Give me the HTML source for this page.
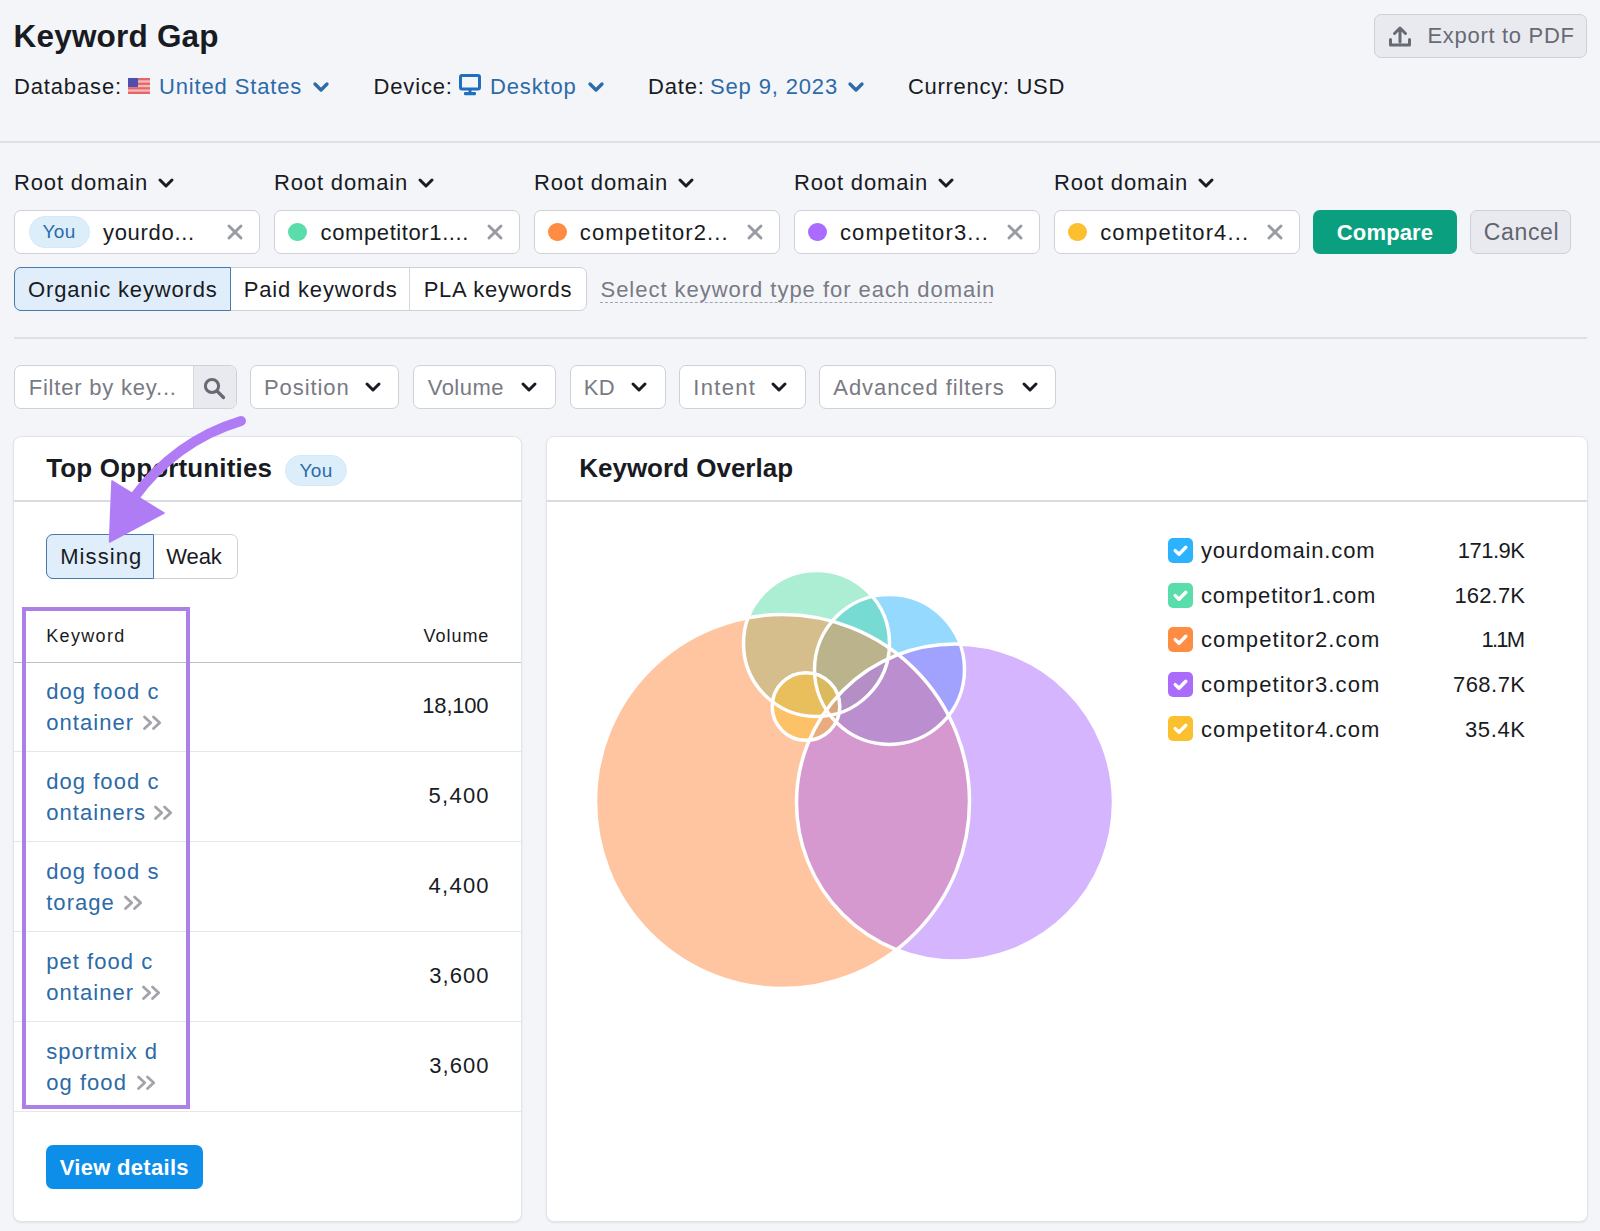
<!DOCTYPE html>
<html><head><meta charset="utf-8">
<style>
*{margin:0;padding:0;box-sizing:border-box}
html,body{width:1600px;height:1231px;overflow:hidden;background:#f4f5f9;font-family:"Liberation Sans",sans-serif;color:#191b23;position:relative}
.t{position:absolute;white-space:nowrap;line-height:1;font-size:22px;letter-spacing:0.85px}
.b{position:absolute;box-sizing:border-box}
.blue{color:#2c6aa8}
.gray{color:#787a84}
.bold{font-weight:bold}
svg{position:absolute;overflow:visible}
</style></head><body>
<div class="t bold" style="left:13.5px;top:20.84px;font-size:31.5px;letter-spacing:0.2px;">Keyword Gap</div>
<div class="t " style="left:14px;top:75.88px;font-size:22px;letter-spacing:0.85px;">Database:</div>
<svg style="left:128px;top:78px" width="22" height="16" viewBox="0 0 22 16">
<rect width="22" height="16" fill="#e2676a"/>
<rect y="2.3" width="22" height="2.3" fill="#f6b9b5"/><rect y="6.9" width="22" height="2.3" fill="#f6b9b5"/><rect y="11.4" width="22" height="2.3" fill="#f6b9b5"/>
<rect width="10" height="9" fill="#4f4fb0"/></svg>
<div class="t blue" style="left:159px;top:75.88px;font-size:22px;letter-spacing:0.85px;">United States</div>
<svg style="left:313px;top:82px" width="16" height="10" viewBox="0 0 16 10"><path d="M2 2 L8 8 L14 2" fill="none" stroke="#2c6aa8" stroke-width="3.3" stroke-linecap="round" stroke-linejoin="round"/></svg>
<div class="t " style="left:373.5px;top:75.88px;font-size:22px;letter-spacing:0.85px;">Device:</div>
<svg style="left:459px;top:74px" width="22" height="22" viewBox="0 0 22 22">
<rect x="1.5" y="1.5" width="19" height="13.5" rx="1.5" fill="none" stroke="#1f6fbf" stroke-width="3"/>
<rect x="9.5" y="15" width="3" height="3" fill="#1f6fbf"/><rect x="5" y="18" width="12" height="3.2" rx="1.2" fill="#1f6fbf"/></svg>
<div class="t blue" style="left:490px;top:75.88px;font-size:22px;letter-spacing:0.85px;">Desktop</div>
<svg style="left:587.5px;top:82px" width="16" height="10" viewBox="0 0 16 10"><path d="M2 2 L8 8 L14 2" fill="none" stroke="#2c6aa8" stroke-width="3.3" stroke-linecap="round" stroke-linejoin="round"/></svg>
<div class="t " style="left:648px;top:75.88px;font-size:22px;letter-spacing:0.85px;">Date:</div>
<div class="t blue" style="left:710px;top:75.88px;font-size:22px;letter-spacing:0.85px;">Sep 9, 2023</div>
<svg style="left:848px;top:82px" width="16" height="10" viewBox="0 0 16 10"><path d="M2 2 L8 8 L14 2" fill="none" stroke="#2c6aa8" stroke-width="3.3" stroke-linecap="round" stroke-linejoin="round"/></svg>
<div class="t " style="left:908px;top:75.88px;font-size:22px;letter-spacing:0.7px;">Currency: USD</div>
<div class="b" style="left:1374px;top:14px;width:213px;height:44px;border:1px solid #cfd1d8;border-radius:7px;background:#e9eaef"></div>
<svg style="left:1389px;top:25px" width="22" height="22" viewBox="0 0 22 22">
<path d="M11 17 V3.5 M5.5 8.5 L11 3 L16.5 8.5" fill="none" stroke="#676a74" stroke-width="3" stroke-linecap="round" stroke-linejoin="round"/>
<path d="M1.5 14.5 V20 H20.5 V14.5" fill="none" stroke="#676a74" stroke-width="3" stroke-linecap="round" stroke-linejoin="round"/></svg>
<div class="t " style="left:1427.5px;top:24.78px;font-size:22px;letter-spacing:0.69px;color:#676a74">Export to PDF</div>
<div class="b" style="left:0px;top:141px;width:1600px;height:2px;background:#dfe0e6"></div>
<div class="t " style="left:14px;top:171.98px;font-size:22px;letter-spacing:0.85px;">Root domain</div>
<svg style="left:157.5px;top:178px" width="16" height="10" viewBox="0 0 16 10"><path d="M2 2 L8 8 L14 2" fill="none" stroke="#191b23" stroke-width="3" stroke-linecap="round" stroke-linejoin="round"/></svg>
<div class="b" style="left:14px;top:210px;width:246px;height:44px;border:1px solid #cfd1d8;border-radius:7px;background:#fff"></div>
<div class="b" style="left:28.5px;top:216.3px;width:61.5px;height:31.5px;border-radius:16px;background:#ddeefb;border:1px solid #d6e7f7"></div>
<div class="t blue" style="left:42.5px;top:222.32px;font-size:19px;letter-spacing:0.4px;">You</div>
<div class="t " style="left:103px;top:221.98px;font-size:22px;letter-spacing:0.69px;">yourdo...</div>
<svg style="left:227px;top:224.3px" width="16" height="16" viewBox="0 0 16 16"><path d="M2 2 L14 14 M14 2 L2 14" fill="none" stroke="#989aa4" stroke-width="2.9" stroke-linecap="round"/></svg>
<div class="t " style="left:274px;top:171.98px;font-size:22px;letter-spacing:0.85px;">Root domain</div>
<svg style="left:417.5px;top:178px" width="16" height="10" viewBox="0 0 16 10"><path d="M2 2 L8 8 L14 2" fill="none" stroke="#191b23" stroke-width="3" stroke-linecap="round" stroke-linejoin="round"/></svg>
<div class="b" style="left:274px;top:210px;width:246px;height:44px;border:1px solid #cfd1d8;border-radius:7px;background:#fff"></div>
<div class="b" style="left:288px;top:222.8px;width:18.5px;height:18.5px;border-radius:50%;background:#59ddaa"></div>
<div class="t " style="left:320.6px;top:221.98px;font-size:22px;letter-spacing:0.6px;">competitor1....</div>
<svg style="left:487px;top:224.3px" width="16" height="16" viewBox="0 0 16 16"><path d="M2 2 L14 14 M14 2 L2 14" fill="none" stroke="#989aa4" stroke-width="2.9" stroke-linecap="round"/></svg>
<div class="t " style="left:534px;top:171.98px;font-size:22px;letter-spacing:0.85px;">Root domain</div>
<svg style="left:677.5px;top:178px" width="16" height="10" viewBox="0 0 16 10"><path d="M2 2 L8 8 L14 2" fill="none" stroke="#191b23" stroke-width="3" stroke-linecap="round" stroke-linejoin="round"/></svg>
<div class="b" style="left:534px;top:210px;width:246px;height:44px;border:1px solid #cfd1d8;border-radius:7px;background:#fff"></div>
<div class="b" style="left:548px;top:222.8px;width:18.5px;height:18.5px;border-radius:50%;background:#ff8c43"></div>
<div class="t " style="left:579.8px;top:221.98px;font-size:22px;letter-spacing:1.12px;">competitor2...</div>
<svg style="left:747px;top:224.3px" width="16" height="16" viewBox="0 0 16 16"><path d="M2 2 L14 14 M14 2 L2 14" fill="none" stroke="#989aa4" stroke-width="2.9" stroke-linecap="round"/></svg>
<div class="t " style="left:794px;top:171.98px;font-size:22px;letter-spacing:0.85px;">Root domain</div>
<svg style="left:937.5px;top:178px" width="16" height="10" viewBox="0 0 16 10"><path d="M2 2 L8 8 L14 2" fill="none" stroke="#191b23" stroke-width="3" stroke-linecap="round" stroke-linejoin="round"/></svg>
<div class="b" style="left:794px;top:210px;width:246px;height:44px;border:1px solid #cfd1d8;border-radius:7px;background:#fff"></div>
<div class="b" style="left:808px;top:222.8px;width:18.5px;height:18.5px;border-radius:50%;background:#ab6cfe"></div>
<div class="t " style="left:840px;top:221.98px;font-size:22px;letter-spacing:1.12px;">competitor3...</div>
<svg style="left:1007px;top:224.3px" width="16" height="16" viewBox="0 0 16 16"><path d="M2 2 L14 14 M14 2 L2 14" fill="none" stroke="#989aa4" stroke-width="2.9" stroke-linecap="round"/></svg>
<div class="t " style="left:1054px;top:171.98px;font-size:22px;letter-spacing:0.85px;">Root domain</div>
<svg style="left:1197.5px;top:178px" width="16" height="10" viewBox="0 0 16 10"><path d="M2 2 L8 8 L14 2" fill="none" stroke="#191b23" stroke-width="3" stroke-linecap="round" stroke-linejoin="round"/></svg>
<div class="b" style="left:1054px;top:210px;width:246px;height:44px;border:1px solid #cfd1d8;border-radius:7px;background:#fff"></div>
<div class="b" style="left:1068px;top:222.8px;width:18.5px;height:18.5px;border-radius:50%;background:#fcbf2e"></div>
<div class="t " style="left:1100.2px;top:221.98px;font-size:22px;letter-spacing:1.12px;">competitor4...</div>
<svg style="left:1267px;top:224.3px" width="16" height="16" viewBox="0 0 16 16"><path d="M2 2 L14 14 M14 2 L2 14" fill="none" stroke="#989aa4" stroke-width="2.9" stroke-linecap="round"/></svg>
<div class="b" style="left:1313px;top:210px;width:144px;height:44px;border-radius:7px;background:#0aa07f"></div>
<div class="t bold" style="left:1336.8px;top:221.98px;font-size:22px;letter-spacing:0.15px;color:#fff">Compare</div>
<div class="b" style="left:1469.5px;top:210px;width:101px;height:44px;border:1px solid #cfd1d8;border-radius:7px;background:#e9eaef"></div>
<div class="t " style="left:1483.8px;top:221.13px;font-size:23px;letter-spacing:0.64px;color:#62646f">Cancel</div>
<div class="b" style="left:14px;top:267px;width:573px;height:44px;border:1px solid #cfd1d8;border-radius:7px;background:#fff"></div>
<div class="b" style="left:14px;top:267px;width:217px;height:44px;border:1px solid #4779aa;border-radius:7px 0 0 7px;background:#e0eefb"></div>
<div class="b" style="left:409px;top:268px;width:1px;height:42px;background:#d6d8de"></div>
<div class="t " style="left:28px;top:278.98px;font-size:22px;letter-spacing:0.85px;">Organic keywords</div>
<div class="t " style="left:243.7px;top:278.98px;font-size:22px;letter-spacing:0.83px;">Paid keywords</div>
<div class="t " style="left:423.7px;top:278.98px;font-size:22px;letter-spacing:0.76px;">PLA keywords</div>
<div class="t gray" style="left:600.5px;top:278.98px;font-size:22px;letter-spacing:0.97px;">Select keyword type for each domain</div>
<div class="b" style="left:600px;top:301.5px;width:392px;height:0px;border-top:1.5px dashed #a3a5ae"></div>
<div class="b" style="left:14px;top:337px;width:1573px;height:2px;background:#dfe0e6"></div>
<div class="b" style="left:14px;top:365px;width:223px;height:44px;border:1px solid #cfd1d8;border-radius:7px;background:#fff;overflow:hidden"><div class="b" style="left:178px;top:0;width:45px;height:44px;background:#e9eaef;border-left:1px solid #d6d8de"></div></div>
<div class="t gray" style="left:28.7px;top:376.98px;font-size:22px;letter-spacing:0.8px;">Filter by key...</div>
<svg style="left:203px;top:377px" width="23" height="22" viewBox="0 0 23 22"><circle cx="9" cy="9" r="6.6" fill="none" stroke="#676a74" stroke-width="3"/><path d="M14 14 L20.5 20.5" stroke="#676a74" stroke-width="3.2" stroke-linecap="round"/></svg>
<div class="b" style="left:250px;top:365px;width:149px;height:44px;border:1px solid #cfd1d8;border-radius:7px;background:#fff"></div>
<div class="t gray" style="left:264px;top:376.98px;font-size:22px;letter-spacing:0.92px;">Position</div>
<svg style="left:365.3px;top:382px" width="16" height="10" viewBox="0 0 16 10"><path d="M2 2 L8 8 L14 2" fill="none" stroke="#191b23" stroke-width="3" stroke-linecap="round" stroke-linejoin="round"/></svg>
<div class="b" style="left:413px;top:365px;width:143px;height:44px;border:1px solid #cfd1d8;border-radius:7px;background:#fff"></div>
<div class="t gray" style="left:427.7px;top:376.98px;font-size:22px;letter-spacing:0.49px;">Volume</div>
<svg style="left:521.0px;top:382px" width="16" height="10" viewBox="0 0 16 10"><path d="M2 2 L8 8 L14 2" fill="none" stroke="#191b23" stroke-width="3" stroke-linecap="round" stroke-linejoin="round"/></svg>
<div class="b" style="left:570px;top:365px;width:96px;height:44px;border:1px solid #cfd1d8;border-radius:7px;background:#fff"></div>
<div class="t gray" style="left:583.75px;top:376.98px;font-size:22px;letter-spacing:0.33px;">KD</div>
<svg style="left:631.2px;top:382px" width="16" height="10" viewBox="0 0 16 10"><path d="M2 2 L8 8 L14 2" fill="none" stroke="#191b23" stroke-width="3" stroke-linecap="round" stroke-linejoin="round"/></svg>
<div class="b" style="left:679px;top:365px;width:127px;height:44px;border:1px solid #cfd1d8;border-radius:7px;background:#fff"></div>
<div class="t gray" style="left:693.3px;top:376.98px;font-size:22px;letter-spacing:1.3px;">Intent</div>
<svg style="left:771.2px;top:382px" width="16" height="10" viewBox="0 0 16 10"><path d="M2 2 L8 8 L14 2" fill="none" stroke="#191b23" stroke-width="3" stroke-linecap="round" stroke-linejoin="round"/></svg>
<div class="b" style="left:819px;top:365px;width:237px;height:44px;border:1px solid #cfd1d8;border-radius:7px;background:#fff"></div>
<div class="t gray" style="left:833.3px;top:376.98px;font-size:22px;letter-spacing:0.93px;">Advanced filters</div>
<svg style="left:1021.8px;top:382px" width="16" height="10" viewBox="0 0 16 10"><path d="M2 2 L8 8 L14 2" fill="none" stroke="#191b23" stroke-width="3" stroke-linecap="round" stroke-linejoin="round"/></svg>
<div class="b" style="left:13px;top:436px;width:508.5px;height:786px;border:1px solid #e3e4e9;border-radius:8px;background:#fff;box-shadow:0 1px 2px rgba(0,0,0,0.08)"></div>
<div class="b" style="left:546px;top:435.5px;width:1041.5px;height:786.5px;border:1px solid #e3e4e9;border-radius:8px;background:#fff;box-shadow:0 1px 2px rgba(0,0,0,0.08)"></div>
<div class="b" style="left:14px;top:499.5px;width:507px;height:2px;background:#d9dbe0"></div>
<div class="b" style="left:547px;top:499.5px;width:1040px;height:2px;background:#d9dbe0"></div>
<div class="t bold" style="left:46.2px;top:454.99px;font-size:26px;letter-spacing:0.15px;">Top Opportunities</div>
<div class="b" style="left:285.3px;top:455px;width:61.5px;height:31px;border-radius:16px;background:#ddeefb;border:1px solid #d6e7f7"></div>
<div class="t blue" style="left:299.5px;top:460.52px;font-size:19px;letter-spacing:0.4px;">You</div>
<div class="t bold" style="left:579.2px;top:454.99px;font-size:26px;letter-spacing:0px;">Keyword Overlap</div>
<div class="b" style="left:45.5px;top:534px;width:192px;height:44.5px;border:1px solid #cfd1d8;border-radius:7px;background:#fff"></div>
<div class="b" style="left:45.5px;top:534px;width:108px;height:44.5px;border:1px solid #4779aa;border-radius:7px 0 0 7px;background:#e0eefb"></div>
<div class="t " style="left:60.2px;top:545.78px;font-size:22px;letter-spacing:1.1px;">Missing</div>
<div class="t " style="left:166.25px;top:545.78px;font-size:22px;letter-spacing:-0.1px;">Weak</div>
<div class="t " style="left:46.2px;top:626.96px;font-size:18px;letter-spacing:1.35px;">Keyword</div>
<div class="t " style="left:423.6px;top:626.96px;font-size:18px;letter-spacing:0.95px;">Volume</div>
<div class="b" style="left:14px;top:661.5px;width:507px;height:1.5px;background:#bfc1c8"></div>
<div class="t blue" style="left:46.2px;top:680.78px;font-size:22px;letter-spacing:1.05px;">dog food c</div>
<div class="t blue" style="left:46.2px;top:712.08px;font-size:22px;letter-spacing:1.05px;">ontainer</div>
<div class="t " style="right:1111.6px;top:695.28px;font-size:22px;letter-spacing:-0.2px;">18,100</div>
<div class="b" style="left:14px;top:751.3px;width:507px;height:1px;background:#e6e7ec"></div>
<svg style="left:141.5px;top:714.5px" width="20" height="16" viewBox="0 0 20 16"><path d="M2.5 2 L8.7 7.75 L2.5 13.5 M11.5 2 L17.7 7.75 L11.5 13.5" fill="none" stroke="#a3a4aa" stroke-width="2.8" stroke-linecap="round" stroke-linejoin="round"/></svg>
<div class="t blue" style="left:46.2px;top:770.78px;font-size:22px;letter-spacing:1.05px;">dog food c</div>
<div class="t blue" style="left:46.2px;top:802.08px;font-size:22px;letter-spacing:1.05px;">ontainers</div>
<div class="t " style="right:1110.15px;top:785.28px;font-size:22px;letter-spacing:1.25px;">5,400</div>
<div class="b" style="left:14px;top:841.3px;width:507px;height:1px;background:#e6e7ec"></div>
<svg style="left:153.2px;top:804.5px" width="20" height="16" viewBox="0 0 20 16"><path d="M2.5 2 L8.7 7.75 L2.5 13.5 M11.5 2 L17.7 7.75 L11.5 13.5" fill="none" stroke="#a3a4aa" stroke-width="2.8" stroke-linecap="round" stroke-linejoin="round"/></svg>
<div class="t blue" style="left:46.2px;top:860.78px;font-size:22px;letter-spacing:1.05px;">dog food s</div>
<div class="t blue" style="left:46.2px;top:892.08px;font-size:22px;letter-spacing:1.05px;">torage</div>
<div class="t " style="right:1110.15px;top:875.28px;font-size:22px;letter-spacing:1.25px;">4,400</div>
<div class="b" style="left:14px;top:931.3px;width:507px;height:1px;background:#e6e7ec"></div>
<svg style="left:123px;top:894.5px" width="20" height="16" viewBox="0 0 20 16"><path d="M2.5 2 L8.7 7.75 L2.5 13.5 M11.5 2 L17.7 7.75 L11.5 13.5" fill="none" stroke="#a3a4aa" stroke-width="2.8" stroke-linecap="round" stroke-linejoin="round"/></svg>
<div class="t blue" style="left:46.2px;top:950.78px;font-size:22px;letter-spacing:1.05px;">pet food c</div>
<div class="t blue" style="left:46.2px;top:982.08px;font-size:22px;letter-spacing:1.05px;">ontainer</div>
<div class="t " style="right:1110.3px;top:965.28px;font-size:22px;letter-spacing:1.1px;">3,600</div>
<div class="b" style="left:14px;top:1021.3px;width:507px;height:1px;background:#e6e7ec"></div>
<svg style="left:141.3px;top:984.5px" width="20" height="16" viewBox="0 0 20 16"><path d="M2.5 2 L8.7 7.75 L2.5 13.5 M11.5 2 L17.7 7.75 L11.5 13.5" fill="none" stroke="#a3a4aa" stroke-width="2.8" stroke-linecap="round" stroke-linejoin="round"/></svg>
<div class="t blue" style="left:46.2px;top:1040.78px;font-size:22px;letter-spacing:1.05px;">sportmix d</div>
<div class="t blue" style="left:46.2px;top:1072.08px;font-size:22px;letter-spacing:1.05px;">og food</div>
<div class="t " style="right:1110.3px;top:1055.28px;font-size:22px;letter-spacing:1.1px;">3,600</div>
<div class="b" style="left:14px;top:1111.3px;width:507px;height:1px;background:#e6e7ec"></div>
<svg style="left:135.6px;top:1074.5px" width="20" height="16" viewBox="0 0 20 16"><path d="M2.5 2 L8.7 7.75 L2.5 13.5 M11.5 2 L17.7 7.75 L11.5 13.5" fill="none" stroke="#a3a4aa" stroke-width="2.8" stroke-linecap="round" stroke-linejoin="round"/></svg>
<div class="b" style="left:45.6px;top:1145.4px;width:157px;height:44px;border-radius:7px;background:#0d8ee9"></div>
<div class="t bold" style="left:59.7px;top:1156.58px;font-size:22px;letter-spacing:0.3px;color:#fff">View details</div>
<svg style="left:0;top:0" width="1600" height="1231" viewBox="0 0 1600 1231"><g fill-opacity="0.5">
<circle cx="889.5" cy="669.5" r="75" fill="#2bb3ff"/>
<circle cx="816.5" cy="643.5" r="73" fill="#59ddaa"/>
<circle cx="782.5" cy="801.5" r="187" fill="#ff8c43"/>
<circle cx="955" cy="802.5" r="158.5" fill="#ab6cfe"/>
<circle cx="806" cy="706.5" r="33.8" fill="#fcbf2e"/>
</g><g fill="none" stroke="#fff" stroke-width="3.5">
<circle cx="889.5" cy="669.5" r="75"/>
<circle cx="816.5" cy="643.5" r="73"/>
<circle cx="782.5" cy="801.5" r="187"/>
<circle cx="955" cy="802.5" r="158.5"/>
<circle cx="806" cy="706.5" r="33.8"/>
</g></svg>
<div class="b" style="left:1168px;top:538.0px;width:25px;height:25px;border-radius:5px;background:#2bb3ff"></div>
<svg style="left:1168px;top:538.0px" width="25" height="25" viewBox="0 0 25 25"><path d="M7.2 12.6 L11 16.3 L17.8 9.2" fill="none" stroke="#fff" stroke-width="3.4" stroke-linecap="round" stroke-linejoin="round"/></svg>
<div class="t " style="left:1200.9px;top:540.18px;font-size:22px;letter-spacing:0.85px;">yourdomain.com</div>
<div class="t " style="right:75.5px;top:540.18px;font-size:22px;letter-spacing:-0.5px;">171.9K</div>
<div class="b" style="left:1168px;top:582.6px;width:25px;height:25px;border-radius:5px;background:#59ddaa"></div>
<svg style="left:1168px;top:582.6px" width="25" height="25" viewBox="0 0 25 25"><path d="M7.2 12.6 L11 16.3 L17.8 9.2" fill="none" stroke="#fff" stroke-width="3.4" stroke-linecap="round" stroke-linejoin="round"/></svg>
<div class="t " style="left:1200.9px;top:584.78px;font-size:22px;letter-spacing:0.85px;">competitor1.com</div>
<div class="t " style="right:74.81999999999994px;top:584.78px;font-size:22px;letter-spacing:0.18px;">162.7K</div>
<div class="b" style="left:1168px;top:627.2px;width:25px;height:25px;border-radius:5px;background:#ff8c43"></div>
<svg style="left:1168px;top:627.2px" width="25" height="25" viewBox="0 0 25 25"><path d="M7.2 12.6 L11 16.3 L17.8 9.2" fill="none" stroke="#fff" stroke-width="3.4" stroke-linecap="round" stroke-linejoin="round"/></svg>
<div class="t " style="left:1200.9px;top:629.38px;font-size:22px;letter-spacing:1.13px;">competitor2.com</div>
<div class="t " style="right:76.79999999999995px;top:629.38px;font-size:22px;letter-spacing:-1.8px;">1.1M</div>
<div class="b" style="left:1168px;top:671.8px;width:25px;height:25px;border-radius:5px;background:#ab6cfe"></div>
<svg style="left:1168px;top:671.8px" width="25" height="25" viewBox="0 0 25 25"><path d="M7.2 12.6 L11 16.3 L17.8 9.2" fill="none" stroke="#fff" stroke-width="3.4" stroke-linecap="round" stroke-linejoin="round"/></svg>
<div class="t " style="left:1200.9px;top:673.98px;font-size:22px;letter-spacing:1.13px;">competitor3.com</div>
<div class="t " style="right:74.53999999999996px;top:673.98px;font-size:22px;letter-spacing:0.46px;">768.7K</div>
<div class="b" style="left:1168px;top:716.4px;width:25px;height:25px;border-radius:5px;background:#fcbf2e"></div>
<svg style="left:1168px;top:716.4px" width="25" height="25" viewBox="0 0 25 25"><path d="M7.2 12.6 L11 16.3 L17.8 9.2" fill="none" stroke="#fff" stroke-width="3.4" stroke-linecap="round" stroke-linejoin="round"/></svg>
<div class="t " style="left:1200.9px;top:718.58px;font-size:22px;letter-spacing:1.13px;">competitor4.com</div>
<div class="t " style="right:74.34999999999991px;top:718.58px;font-size:22px;letter-spacing:0.65px;">35.4K</div>
<div class="b" style="left:22.2px;top:606.5px;width:168px;height:502.7px;border:4px solid #ad7fe8"></div>
<svg style="left:0;top:0" width="600" height="600" viewBox="0 0 600 600">
<path d="M241 421 Q 175 441 133 499" fill="none" stroke="#b07cf6" stroke-width="10" stroke-linecap="round"/>
<path d="M112 481 L164 513 L109.5 542 Z" fill="#b07cf6" stroke="#b07cf6" stroke-width="1.5" stroke-linejoin="round"/>
</svg>
</body></html>
